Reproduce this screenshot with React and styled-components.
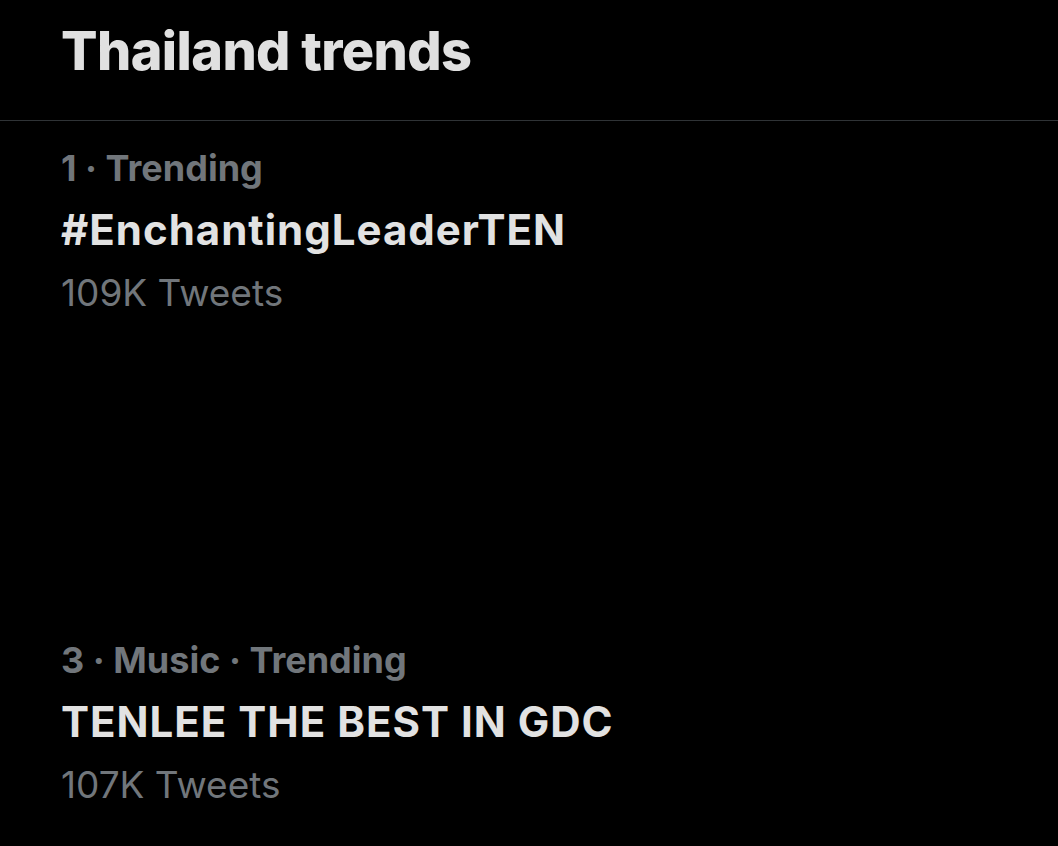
import React from "react";
import styled, { createGlobalStyle } from "styled-components";

const GlobalStyle = createGlobalStyle`
  html, body {
    margin: 0;
    padding: 0;
    background: #000;
  }
  body {
    font-family: Inter, "Noto Sans", sans-serif;
    -webkit-font-smoothing: antialiased;
  }
`;

const Page = styled.div`
  width: 1058px;
  height: 846px;
  background: #000;
  overflow: hidden;
`;

const Header = styled.header`
  padding: 19px 61px 37px;
  border-bottom: 1px solid #2f3336;
`;

const Title = styled.h2`
  margin: 0;
  font-size: 54px;
  line-height: 64px;
  font-weight: 800;
  color: #e0e0e0;
  letter-spacing: -0.6px;
`;

const List = styled.div`
  display: flex;
  flex-direction: column;
  padding: 15px 61px 0;
  gap: 303px;
`;

const Trend = styled.div`
  display: flex;
  flex-direction: column;
`;

const Meta = styled.div`
  font-size: 36px;
  line-height: 64px;
  font-weight: 700;
  color: #71767b;
`;

const Name = styled.div`
  font-size: 42px;
  line-height: 60px;
  font-weight: 700;
  color: #e2e2e2;
  letter-spacing: 1px;
`;

const Count = styled.div`
  font-size: 37px;
  line-height: 65px;
  font-weight: 400;
  color: #71767b;
`;

const trends = [
  { meta: "1 · Trending", name: "#EnchantingLeaderTEN", count: "109K Tweets" },
  { meta: "3 · Music · Trending", name: "TENLEE THE BEST IN GDC", count: "107K Tweets" },
];

export default function App() {
  return (
    <Page>
      <GlobalStyle />
      <Header>
        <Title>Thailand trends</Title>
      </Header>
      <List>
        {trends.map((t) => (
          <Trend key={t.name}>
            <Meta>{t.meta}</Meta>
            <Name>{t.name}</Name>
            <Count>{t.count}</Count>
          </Trend>
        ))}
      </List>
    </Page>
  );
}
